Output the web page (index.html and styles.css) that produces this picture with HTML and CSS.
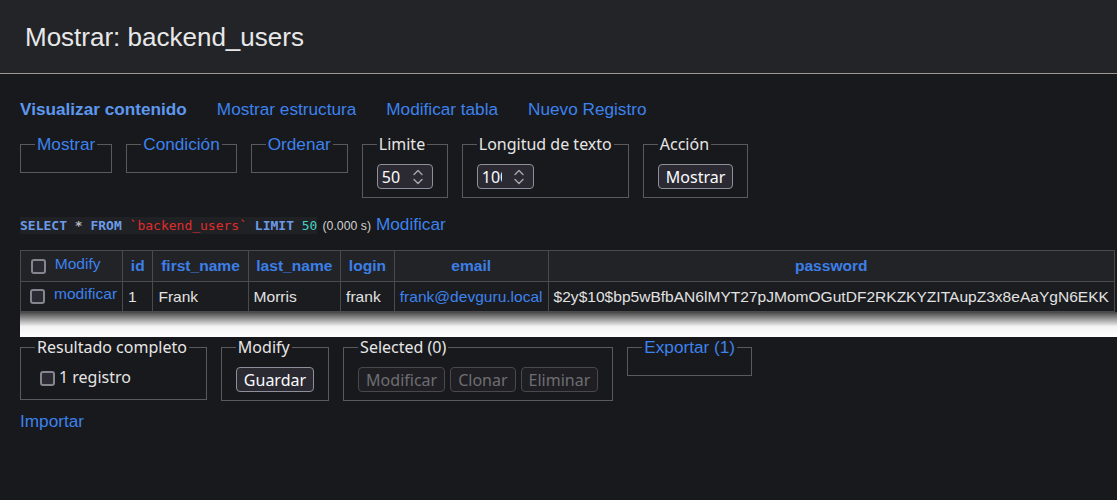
FILE: index.html
```html
<!DOCTYPE html>
<html lang="es">
<head>
<meta charset="utf-8">
<title>Mostrar: backend_users</title>
<link rel="stylesheet" href="styles.css">
</head>
<body>
<header class="topbar">
  <h2 class="title">Mostrar: backend_users</h2>
</header>
<main class="content">
  <nav class="links">
    <a class="active" href="#">Visualizar contenido</a>
    <a href="#">Mostrar estructura</a>
    <a href="#">Modificar tabla</a>
    <a href="#">Nuevo Registro</a>
  </nav>

  <form class="filters">
    <fieldset class="box"><legend><a href="#">Mostrar</a></legend></fieldset>
    <fieldset class="box"><legend><a href="#">Condición</a></legend></fieldset>
    <fieldset class="box"><legend><a href="#">Ordenar</a></legend></fieldset>
    <fieldset class="box">
      <legend>Limite</legend>
      <div class="num"><span class="val">50</span><svg class="spin" width="10" height="16" viewBox="0 0 10 16"><path d="M1 5.5 5 1.5 9 5.5M1 10.5 5 14.5 9 10.5" fill="none" stroke="#a6a6ae" stroke-width="1.4" stroke-linecap="round" stroke-linejoin="round"/></svg></div>
    </fieldset>
    <fieldset class="box">
      <legend>Longitud de texto</legend>
      <div class="num num-wide"><span class="val">100</span><svg class="spin" width="10" height="16" viewBox="0 0 10 16"><path d="M1 5.5 5 1.5 9 5.5M1 10.5 5 14.5 9 10.5" fill="none" stroke="#a6a6ae" stroke-width="1.4" stroke-linecap="round" stroke-linejoin="round"/></svg></div>
    </fieldset>
    <fieldset class="box">
      <legend>Acción</legend>
      <button type="button" class="btn">Mostrar</button>
    </fieldset>
  </form>

  <p class="sql"><code class="query"><b class="kw">SELECT</b> <b class="op">*</b> <b class="kw">FROM</b> <span class="str">`backend_users`</span> <b class="kw">LIMIT</b> <span class="numlit">50</span></code><span class="time">(0.000 s)</span><a href="#">Modificar</a></p>

  <div class="scroll">
    <table class="grid">
      <thead>
        <tr>
          <th class="sel-h"><span class="sel"><span class="check"></span><a href="#">Modify</a></span></th>
          <th>id</th>
          <th>first_name</th>
          <th>last_name</th>
          <th>login</th>
          <th>email</th>
          <th>password</th>
        </tr>
      </thead>
      <tbody>
        <tr>
          <td><span class="sel"><span class="check"></span><a href="#">modificar</a></span></td>
          <td>1</td>
          <td>Frank</td>
          <td>Morris</td>
          <td>frank</td>
          <td><a href="#">frank@devguru.local</a></td>
          <td>$2y$10$bp5wBfbAN6lMYT27pJMomOGutDF2RKZKYZITAupZ3x8eAaYgN6EKK</td>
        </tr>
      </tbody>
    </table>
  </div>
  <div class="shade"></div>

  <div class="actions">
    <fieldset class="box box-result">
      <legend>Resultado completo</legend>
      <label class="all"><span class="check check-lg"></span>1 registro</label>
    </fieldset>
    <fieldset class="box">
      <legend>Modify</legend>
      <button type="button" class="btn">Guardar</button>
    </fieldset>
    <fieldset class="box">
      <legend>Selected (0)</legend>
      <div class="btns">
        <button type="button" class="btn" disabled>Modificar</button>
        <button type="button" class="btn" disabled>Clonar</button>
        <button type="button" class="btn" disabled>Eliminar</button>
      </div>
    </fieldset>
    <fieldset class="box"><legend><a href="#">Exportar (1)</a></legend></fieldset>
  </div>

  <a class="import" href="#">Importar</a>
</main>
</body>
</html>
```

FILE: styles.css
```css
html, body {
  margin: 0;
  background: #18191c;
}

body {
  color: #e4e4e4;
  font-family: "Noto Sans", sans-serif;
  font-size: 16px;
  height: 500px;
  overflow: hidden;
}

a {
  color: #3d82ee;
  text-decoration: none;
  font-family: "Liberation Sans", Arial, sans-serif;
}

.topbar {
  height: 73px;
  background: #232428;
  border-bottom: 1px solid #9c988f;
  display: flex;
  align-items: center;
  padding-left: 25px;
}

.title {
  margin: 0;
  font: 400 26px/30px "Liberation Sans", Arial, sans-serif;
  color: #e8e8e8;
}

.content {
  padding-left: 20px;
}

.links {
  display: flex;
  gap: 30px;
  margin-top: 25px;
  font-size: 17.2px;
  line-height: 20px;
}

.links a {
  font-size: 17.2px;
}

.links .active {
  font-weight: bold;
  color: #5d98ee;
}

.filters,
.actions {
  display: flex;
  align-items: flex-start;
  gap: 14px;
  margin: 0;
}

.filters {
  margin-top: 15px;
}

.box {
  margin: 0;
  padding: 10px 14px 8px;
  border: 1px solid #5a5a5c;
  min-width: 0;
}

.box-result {
  padding-right: 17px;
}

.box legend {
  padding: 0 2px;
  line-height: 20px;
  font-size: 16px;
  color: #e6e6e6;
}

.box legend a {
  font-size: 17.2px;
  line-height: 20px;
}

.num {
  display: flex;
  align-items: center;
  width: 56px;
  height: 25px;
  box-sizing: border-box;
  border: 1px solid #8f8f9b;
  border-radius: 4px;
  background: #2b2a33;
  padding: 0 9px 0 4px;
  color: #fbfbfe;
  font-size: 16px;
  line-height: 20px;
}

.num-wide {
  width: 57px;
}

.num .val {
  width: 20px;
  overflow: hidden;
  white-space: nowrap;
}

.num-wide .val {
  width: 20.5px;
}

.num .spin {
  margin-left: auto;
  flex: none;
}

.btn {
  height: 25px;
  box-sizing: border-box;
  padding: 0 7px;
  border: 1px solid #8f8f9b;
  border-radius: 4px;
  background: #2b2a33;
  color: #fbfbfe;
  font: 16px/20px "Noto Sans", sans-serif;
  margin: 0;
}

.btn:disabled {
  background: #1f1f23;
  border-color: #48484d;
  color: #6e6e72;
}

.btns {
  display: flex;
  gap: 5px;
}

.sql {
  display: flex;
  align-items: baseline;
  gap: 5px;
  margin: 16px 0 0;
  line-height: 20px;
}

.sql a {
  font-size: 17.2px;
}

.query {
  font: 13px/15px "DejaVu Sans Mono", monospace;
  background: #202124;
  padding: 1px 0;
  color: #c8c8c8;
}

.query .kw {
  color: #6b9be8;
}

.query .op {
  color: #b8b8c0;
}

.query .str {
  color: #e02b2b;
}

.query .numlit {
  color: #45cfc6;
}

.time {
  font: 12.3px "Liberation Sans", Arial, sans-serif;
  color: #d0d0d0;
}

.scroll {
  margin-top: 16px;
}

.grid {
  border-collapse: collapse;
  font: 15.55px/18px "Liberation Sans", Arial, sans-serif;
  color: #e2e2e2;
}

.grid th,
.grid td {
  border: 1px solid #4b4b4e;
  white-space: nowrap;
}

.grid th {
  padding: 6px 7.75px;
  background: #222327;
  color: #3c7fe8;
  font-weight: bold;
  text-align: center;
}

.grid th.sel-h {
  text-align: left;
  font-weight: normal;
}

.grid td {
  padding: 5.5px 5px;
  background: #1b1c1f;
  text-align: left;
}

.grid a {
  font-size: 15.55px;
}

.sel {
  display: flex;
  align-items: center;
}

.sel a {
  margin-top: -5px;
}

.check {
  display: inline-block;
  flex: none;
  width: 15px;
  height: 15px;
  box-sizing: border-box;
  border: 2px solid #85858f;
  border-radius: 3px;
  background: #2b2a33;
  margin: 0 9px 0 4px;
}

.grid th .check {
  margin-left: 2px;
}

.shade {
  height: 25px;
  background: linear-gradient(to bottom, #464646 0%, #f3f3f3 58%, #ffffff 100%);
}

.all {
  display: flex;
  align-items: flex-start;
  line-height: 20px;
}

.check-lg {
  margin: 4px 4px 5px 5px;
}

.import {
  display: block;
  width: max-content;
  margin-top: 10px;
  font-size: 17.2px;
  line-height: 20px;
}
```
